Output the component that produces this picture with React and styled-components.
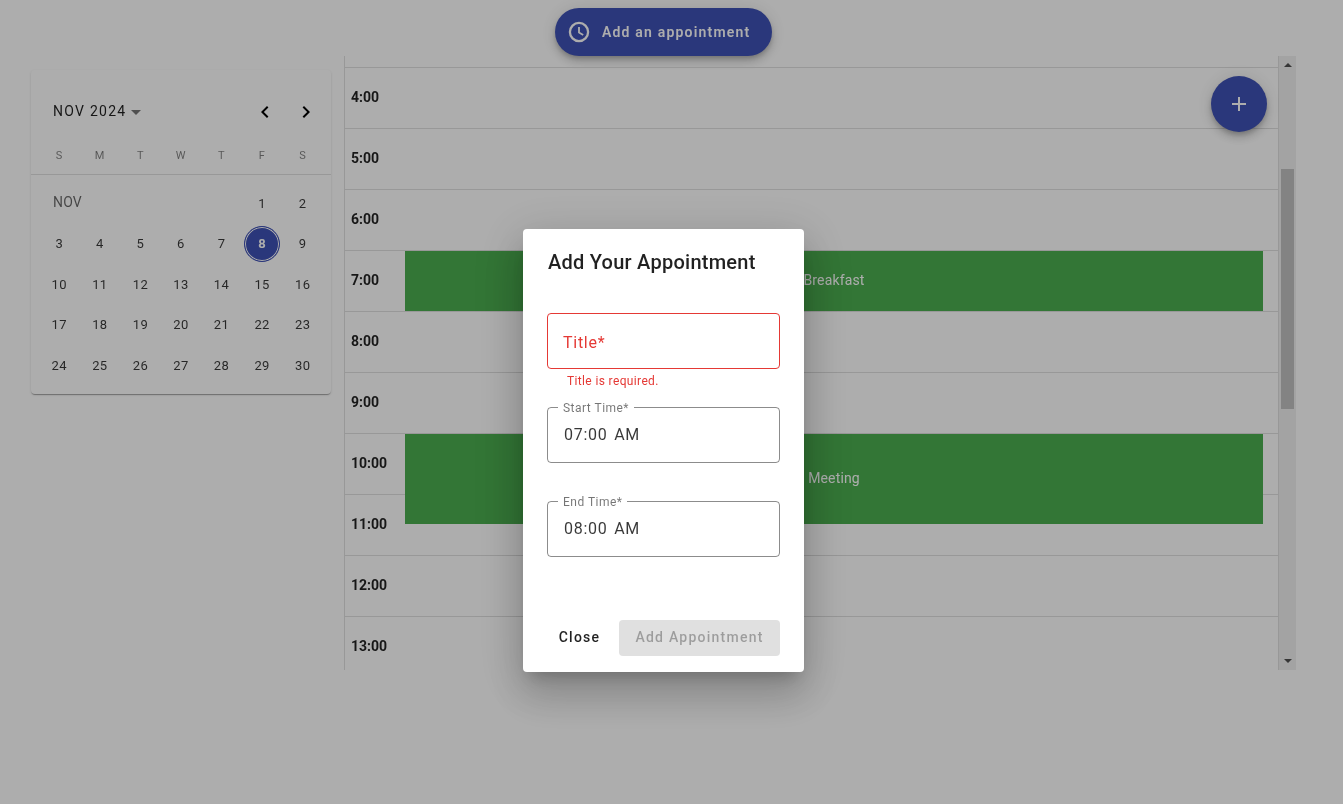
import React from "react";
import styled, { createGlobalStyle } from "styled-components";
import { MdAdd, MdChevronLeft, MdChevronRight, MdArrowDropDown } from "react-icons/md";

const Global = createGlobalStyle`
  html, body { margin: 0; padding: 0; background: #fff; height: 100%; overflow: hidden; }
  body { font-family: Roboto, "Liberation Sans", sans-serif; color: rgba(0,0,0,.87); }
`;

const Page = styled.div`
  width: 1343px;
  height: 804px;
  position: relative;
  overflow: hidden;
  will-change: opacity;
`;
const TopBar = styled.div`
  display: flex;
  justify-content: center;
  padding: 8px 16px 0 0;
  height: 48px;
`;
const ExtendedFab = styled.button`
  display: flex;
  align-items: center;
  gap: 11px;
  height: 48px;
  width: 217px;
  padding: 0 0 0 12px;
  border: 0;
  border-radius: 24px;
  background: #3f51b5;
  color: #fff;
  font: 600 14px Roboto, sans-serif;
  letter-spacing: 0.085em;
  box-shadow: 0 3px 5px -1px rgba(0,0,0,.2), 0 6px 10px 0 rgba(0,0,0,.14), 0 1px 18px 0 rgba(0,0,0,.12);
`;
const Content = styled.div`
  display: flex;
  align-items: flex-start;
  gap: 14px;
  padding-left: 31px;
`;
const Calendar = styled.section`
  width: 300px;
  height: 324px;
  margin-top: 14px;
  border-radius: 4px;
  background: #fff;
  box-shadow: 0 2px 1px -1px rgba(0,0,0,.2), 0 1px 1px 0 rgba(0,0,0,.14), 0 1px 3px 0 rgba(0,0,0,.12);
  flex: none;
`;
const CalHeader = styled.div`
  display: flex;
  align-items: center;
  height: 24px;
  padding: 29px 13px 0 22px;
`;
const MonthLabel = styled.span`
  font-size: 14px;
  letter-spacing: 0.09em;
  color: rgba(0,0,0,.87);
`;
const Caret = styled.span`
  display: flex;
  color: rgba(0,0,0,.54);
  margin: 2px 0 0 -2px;
  flex: 1;
`;
const Nav = styled.span`
  display: flex;
  gap: 17px;
  margin-top: 2px;
  color: #000;
`;
const Weekdays = styled.div`
  display: grid;
  grid-template-columns: repeat(7, 40.57px);
  padding: 0 8px 6px;
  margin: 21px 0 8px;
  height: 24px;
  border-bottom: 1px solid #e0e0e0;
  box-sizing: content-box;
`;
const Weekday = styled.span`
  font-size: 11px;
  line-height: 24px;
  text-align: center;
  color: rgba(0,0,0,.5);
  letter-spacing: 0.04em;
`;
const Days = styled.div`
  display: grid;
  grid-template-columns: repeat(7, 40.57px);
  grid-auto-rows: 40.5px;
  padding: 0 8px;
`;
const Day = styled.span`
  display: flex;
  align-items: center;
  justify-content: center;
  font-size: 13px;
  letter-spacing: 0.03em;
  color: rgba(0,0,0,.78);
`;
const MonthTag = styled.span`
  grid-column: span 5;
  display: flex;
  align-items: center;
  padding: 0 0 2px 14px;
  font-size: 14px;
  letter-spacing: 0.01em;
  color: rgba(0,0,0,.6);
`;
const Selected = styled.span`
  width: 36px;
  height: 36px;
  box-sizing: border-box;
  display: flex;
  align-items: center;
  justify-content: center;
  border-radius: 50%;
  background: #3f51b5;
  border: 1px solid #3f51b5;
  box-shadow: inset 0 0 0 1px #fff;
  color: #fff;
  font-weight: 700;
`;
const Schedule = styled.section`
  display: flex;
  width: 951px;
  height: 614px;
  flex: none;
`;
const Timeline = styled.div`
  flex: 1;
  min-width: 0;
  overflow: hidden;
  border-left: 1px solid #e0e0e0;
  position: relative;
  margin-left: -1px;
`;
const TopStub = styled.div`
  height: 12px;
  box-sizing: border-box;
  border-bottom: 1px solid #e0e0e0;
`;
const Row = styled.div`
  position: relative;
  box-sizing: border-box;
  height: 61px;
  border-bottom: 1px solid #e0e0e0;
  display: flex;
  align-items: center;
  padding: 0 0 2px 6px;
`;
const Hour = styled.span`
  font-size: 14px;
  font-weight: 700;
  color: rgba(0,0,0,.87);
`;
const Event = styled.div`
  position: absolute;
  left: 60px;
  right: 15px;
  top: 0;
  height: ${p => p.$h}px;
  box-sizing: border-box;
  padding-bottom: 2px;
  background: #4caf50;
  color: #fff;
  font-size: 14px;
  letter-spacing: 0.01em;
  display: flex;
  align-items: center;
  justify-content: center;
  z-index: 1;
`;
const Scrollbar = styled.div`
  width: 17px;
  flex: none;
  background: #f1f1f1;
  border-left: 1px solid #e0e0e0;
  display: flex;
  flex-direction: column;
  align-items: center;
  padding-top: 7px;
  box-sizing: content-box;
`;
const ArrowUp = styled.span`
  width: 0;
  height: 0;
  border-left: 4px solid transparent;
  border-right: 4px solid transparent;
  border-bottom: 4px solid #505050;
`;
const ArrowDown = styled.span`
  width: 0;
  height: 0;
  margin-top: 250px;
  border-left: 4px solid transparent;
  border-right: 4px solid transparent;
  border-top: 4px solid #505050;
`;
const Thumb = styled.span`
  width: 13px;
  height: 240px;
  margin-top: 102px;
  background: #c1c1c1;
`;
const AddFab = styled.button`
  position: absolute;
  left: 1211px;
  top: 76px;
  width: 56px;
  height: 56px;
  border: 0;
  padding: 0;
  border-radius: 50%;
  background: #3f51b5;
  color: #fff;
  display: flex;
  align-items: center;
  justify-content: center;
  box-shadow: 0 3px 5px -1px rgba(0,0,0,.2), 0 6px 10px 0 rgba(0,0,0,.14), 0 1px 18px 0 rgba(0,0,0,.12);
  z-index: 2;
`;
const Overlay = styled.div`
  position: absolute;
  inset: 0;
  z-index: 5;
  background: rgba(0,0,0,.32);
  display: flex;
  justify-content: center;
  align-items: flex-start;
  padding: 229px 16px 0 0;
  box-sizing: border-box;
`;
const Dialog = styled.div`
  width: 281px;
  height: 443px;
  box-sizing: border-box;
  background: #fff;
  border-radius: 4px;
  padding: 0 24px;
  display: flex;
  flex-direction: column;
  box-shadow: 0 11px 15px -7px rgba(0,0,0,.2), 0 24px 38px 3px rgba(0,0,0,.14), 0 9px 46px 8px rgba(0,0,0,.12);
`;
const Title = styled.h2`
  margin: 0;
  padding: 18px 0 0 1px;
  font-size: 20px;
  font-weight: 480;
  line-height: 30px;
  letter-spacing: 0.0125em;
  color: rgba(0,0,0,.87);
`;
const Field = styled.div`
  position: relative;
  box-sizing: border-box;
  height: 56px;
  width: 233px;
  margin-top: ${p => p.$mt}px;
  border: 1px solid ${p => (p.$error ? "#e53935" : "rgba(0,0,0,.45)")};
  border-radius: 4px;
  display: flex;
  align-items: center;
  padding-left: 15px;
`;
const Placeholder = styled.span`
  padding-top: 2px;
  font-size: 16px;
  letter-spacing: 0.045em;
  color: #e53935;
`;
const TimeValue = styled.span`
  padding: 0 0 2px 1px;
  font-size: 16px;
  letter-spacing: 0.045em;
  word-spacing: 2px;
  color: rgba(0,0,0,.78);
`;
const FloatLabel = styled.span`
  position: absolute;
  left: 10px;
  top: -6px;
  padding: 0 5px;
  background: #fff;
  font-size: 12px;
  line-height: 12px;
  letter-spacing: 0.04em;
  color: rgba(0,0,0,.54);
`;
const Helper = styled.p`
  margin: 5px 0 0 20px;
  height: 14px;
  font-size: 12px;
  line-height: 14px;
  letter-spacing: 0.03em;
  color: #e53935;
`;
const Actions = styled.div`
  margin-top: auto;
  margin-bottom: 16px;
  display: flex;
  justify-content: flex-end;
  align-items: center;
`;
const CloseBtn = styled.button`
  border: 0;
  background: none;
  padding: 0 8px 2px 0;
  width: 71px;
  height: 36px;
  font: 480 14px Roboto, sans-serif;
  letter-spacing: 0.089em;
  color: rgba(0,0,0,.87);
`;
const SubmitBtn = styled.button`
  border: 0;
  width: 161px;
  height: 36px;
  padding: 0 0 2px;
  border-radius: 4px;
  background: #e0e0e0;
  font: 500 14px Roboto, sans-serif;
  letter-spacing: 0.089em;
  color: rgba(0,0,0,.3);
`;

const ClockIcon = () => (
  <svg width="24" height="24" viewBox="0 0 24 24" fill="none" stroke="currentColor" aria-hidden="true">
    <circle cx="12" cy="12" r="9.1" strokeWidth="2.3" />
    <path d="M12 7v5.4l4.2 2.5" strokeWidth="1.8" />
  </svg>
);

const weekdays = ["S", "M", "T", "W", "T", "F", "S"];
const hours = [4, 5, 6, 7, 8, 9, 10, 11, 12, 13];
const events = { 7: { h: 60, t: "Breakfast" }, 10: { h: 90, t: "Meeting" } };
const days = Array.from({ length: 30 }, (_, i) => i + 1);

export default function App() {
  return (
    <Page>
      <Global />
      <TopBar>
        <ExtendedFab><ClockIcon />Add an appointment</ExtendedFab>
      </TopBar>
      <Content>
        <Calendar>
          <CalHeader>
            <MonthLabel>NOV 2024</MonthLabel>
            <Caret><MdArrowDropDown size={24} /></Caret>
            <Nav><MdChevronLeft size={24} /><MdChevronRight size={24} /></Nav>
          </CalHeader>
          <Weekdays>{weekdays.map((d, i) => <Weekday key={i}>{d}</Weekday>)}</Weekdays>
          <Days>
            <MonthTag>NOV</MonthTag>
            {days.map(d => <Day key={d}>{d === 8 ? <Selected>{d}</Selected> : d}</Day>)}
          </Days>
        </Calendar>
        <Schedule>
          <Timeline>
            <TopStub />
            {hours.map(h => (
              <Row key={h}>
                <Hour>{h}:00</Hour>
                {events[h] && <Event $h={events[h].h}>{events[h].t}</Event>}
              </Row>
            ))}
          </Timeline>
          <Scrollbar>
            <ArrowUp />
            <Thumb />
            <ArrowDown />
          </Scrollbar>
        </Schedule>
      </Content>
      <AddFab aria-label="add"><MdAdd size={24} /></AddFab>
      <Overlay>
        <Dialog>
          <Title>Add Your Appointment</Title>
          <Field $error $mt={36}><Placeholder>Title*</Placeholder></Field>
          <Helper>Title is required.</Helper>
          <Field $mt={19}><FloatLabel>Start Time*</FloatLabel><TimeValue>07:00 AM</TimeValue></Field>
          <Field $mt={38}><FloatLabel>End Time*</FloatLabel><TimeValue>08:00 AM</TimeValue></Field>
          <Actions>
            <CloseBtn>Close</CloseBtn>
            <SubmitBtn disabled>Add Appointment</SubmitBtn>
          </Actions>
        </Dialog>
      </Overlay>
    </Page>
  );
}
